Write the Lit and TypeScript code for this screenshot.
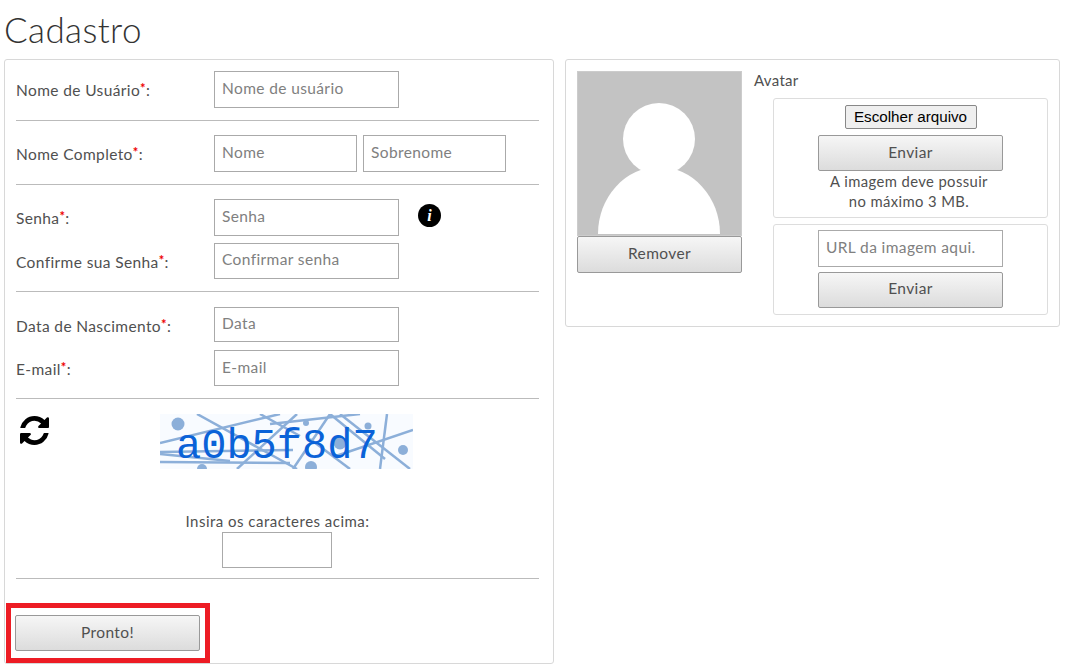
import { LitElement, html, css, svg } from "lit";
import { customElement } from "lit/decorators.js";

const REFRESH = "M1511 928q0 5-1 7-64 268-268 434.5t-478 166.5q-146 0-282.5-55t-243.5-157l-129 129q-19 19-45 19t-45-19-19-45v-448q0-26 19-45t45-19h448q26 0 45 19t19 45-19 45l-137 137q71 66 161 102t187 36q134 0 250-65t186-179q11-17 53-117 8-23 30-23h192q13 0 22.5 9.5t9.5 22.5zm25-800v448q0 26-19 45t-45 19h-448q-26 0-45-19t-19-45 19-45l138-138q-148-137-349-137-134 0-250 65t-186 179q-11 17-53 117-8 23-30 23h-199q-13 0-22.5-9.5t-9.5-22.5v-7q65-268 270-434.5t480-166.5q146 0 284 55.5t245 156.5l130-129q19-19 45-19t45 19 19 45z";

const LINES: number[][] = [
  [37, 0, 137, 55], [0, 29, 120, 0], [0, 38, 133, 36], [0, 48, 130, 49], [0, 40, 70, 47],
  [133, 55, 170, 0], [100, 0, 140, 22], [77, 55, 137, 0], [227, 0, 220, 55], [253, 16, 173, 43],
  [180, 0, 250, 55], [170, 0, 225, 45], [110, 10, 200, 0], [190, 55, 150, 25],
];
const DOTS: number[][] = [[18, 10, 6.5], [146, 9, 3], [208, 12, 3.5], [243, 36, 5], [180, 29, 6.5], [151, 53, 6], [42, 55, 5]];

@customElement("app-root")
export class AppRoot extends LitElement {
  static styles = css`
    :host { display: block; position: relative; box-sizing: border-box; width: 1069px; height: 670px; padding: 0 9px 0 4px; background: #fff; color: #505050; font-family: Lato, "Open Sans", sans-serif; font-size: 15.5px; overflow: hidden; }
    * { box-sizing: border-box; }
    h1 { margin: 0; height: 59px; padding-top: 8px; font-size: 35px; line-height: 42px; font-weight: 300; color: #333; letter-spacing: .4px; }
    .cols { display: flex; gap: 11px; align-items: flex-start; }
    .card { border: 1px solid #d8d8d8; border-radius: 3px; padding: 11px; }
    .left { width: 550px; height: 605px; }
    .right { width: 495px; height: 268px; display: flex; gap: 12px; }
    .sec { border-bottom: 1px solid #bbb; padding-bottom: 12px; margin-right: 3px; }
    .sec.t14 { padding-top: 14px; }
    .sec.t15 { padding-top: 15px; }
    .row { display: flex; align-items: center; }
    .row + .row { margin-top: 7px; }
    .row.g8 + .row { margin-top: 8px; }
    .lab { width: 198px; padding: 1px 0 0 0; white-space: nowrap; letter-spacing: .38px; }
    .g8 .lab { padding-top: 3px; }
    sup { color: #e00; font-size: 13px; line-height: 0; font-weight: 700; vertical-align: 3px; }
    input { display: block; border: 1px solid #aaa; background: #fff; padding: 0 7px 3px; font: inherit; letter-spacing: .38px; color: #444; outline: none; border-radius: 0; }
    input::placeholder { color: #808080; opacity: 1; }
    .w185 { width: 185px; }
    .w143 { width: 143px; }
    .w110 { width: 110px; }
    .h37 { height: 37px; }
    .h36 { height: 36px; }
    .h35 { height: 35px; }
    .hi { padding-bottom: 5px; }
    .ml { margin-left: 6px; }
    .info { width: 23px; height: 23px; border-radius: 50%; background: #000; color: #fff; margin: 0 0 4px 19px; display: flex; align-items: center; justify-content: center; font: italic 700 16px/1 "Liberation Serif", serif; }
    .cap { height: 180px; margin-right: 3px; padding-top: 15px; border-bottom: 1px solid #bbb; display: flex; flex-direction: column; align-items: center; }
    .caprow { display: flex; width: 100%; height: 55px; align-items: flex-start; }
    .ref { width: 29px; height: 29px; margin: 2px 0 0 4px; flex: none; }
    .capimg { width: 253px; height: 55px; margin-left: 111px; flex: none; display: block; overflow: visible; }
    .instr { margin-top: 42px; line-height: 20px; letter-spacing: .48px; font-size: 15px; }
    .cap input { margin: 1px 1px 0 0; }
    .btn { display: block; border: 1px solid #999; border-radius: 2px; background: linear-gradient(#f6f6f6, #dcdcdc); color: #505050; font: inherit; letter-spacing: .38px; padding: 0 0 3px; }
    .go { margin: 36px 0 0 -1px; height: 36px; }
    .mark { position: absolute; left: 6px; top: 603px; width: 204px; height: 60px; border: 5px solid #ed1c24; pointer-events: none; }
    .ava { width: 165px; flex: none; }
    .pic { display: block; width: 165px; height: 165px; border: 1px solid #ccc; background: #c3c3c3; }
    .ava .btn { width: 165px; height: 37px; }
    .up { flex: 1; min-width: 0; }
    .title { height: 27px; line-height: 18px; letter-spacing: .3px; font-size: 15px; }
    .box { margin-left: 19px; border: 1px solid #ddd; border-radius: 3px; display: flex; flex-direction: column; align-items: center; }
    .b1 { height: 120px; padding-top: 6px; }
    .b2 { height: 91px; margin-top: 6px; padding-top: 5px; }
    .file { width: 132px; height: 24px; border: 1px solid #888; border-radius: 2px; background: #efefef; color: #000; font: 15.2px "Liberation Sans", Arial, sans-serif; padding: 0 0 2px; }
    .b1 .btn { margin-top: 6px; height: 36px; width: 185px; }
    .b2 .btn { margin-top: 5px; height: 36px; width: 185px; padding-bottom: 5px; }
    .note { margin-right: 3px; text-align: center; line-height: 20px; font-size: 14.8px; letter-spacing: .4px; }
    .cap-t { font: 42px "Liberation Mono", monospace; fill: #0a62d8; }
  `;

  private req() { return html`<sup>*</sup>:`; }

  render() {
    return html`
      <h1>Cadastro</h1>
      <div class="cols">
        <form class="card left">
          <div class="sec">
            <div class="row">
              <div class="lab">Nome de Usuário${this.req()}</div>
              <input class="w185 h37" placeholder="Nome de usuário" />
            </div>
          </div>
          <div class="sec t14">
            <div class="row">
              <div class="lab">Nome Completo${this.req()}</div>
              <input class="w143 h37" placeholder="Nome" />
              <input class="w143 h37 ml" placeholder="Sobrenome" />
            </div>
          </div>
          <div class="sec t14">
            <div class="row">
              <div class="lab">Senha${this.req()}</div>
              <input class="w185 h37" placeholder="Senha" />
              <span class="info">i</span>
            </div>
            <div class="row">
              <div class="lab">Confirme sua Senha${this.req()}</div>
              <input class="w185 h36 hi" placeholder="Confirmar senha" />
            </div>
          </div>
          <div class="sec t15">
            <div class="row g8">
              <div class="lab">Data de Nascimento${this.req()}</div>
              <input class="w185 h35" placeholder="Data" />
            </div>
            <div class="row">
              <div class="lab">E-mail${this.req()}</div>
              <input class="w185 h36" placeholder="E-mail" />
            </div>
          </div>
          <div class="cap">
            <div class="caprow">
              <svg class="ref" viewBox="0 0 1536 1536"><path d=${REFRESH} fill="#000"></path></svg>
              <svg class="capimg" viewBox="0 0 253 55">
                <svg x="0" y="0" width="253" height="55">
                  <rect width="253" height="55" fill="#f8fbff"></rect>
                  ${LINES.map((l) => svg`<line x1=${l[0]} y1=${l[1]} x2=${l[2]} y2=${l[3]} stroke="#8cafd9" stroke-width="2.5"></line>`)}
                  ${DOTS.map((d) => svg`<circle cx=${d[0]} cy=${d[1]} r=${d[2]} fill="#8cafd9"></circle>`)}
                </svg>
                <text class="cap-t" x="16" y="44">a0b5f8d7</text>
              </svg>
            </div>
            <div class="instr">Insira os caracteres acima:</div>
            <input class="w110 h36" />
          </div>
          <button type="button" class="btn go w185">Pronto!</button>
        </form>
        <div class="card right">
          <div class="ava">
            <svg class="pic" viewBox="1 1 163 163">
              <circle cx="82" cy="68" r="36" fill="#fff"></circle>
              <path d="M21 163 A61 67 0 0 1 143 163 Z" fill="#fff"></path>
            </svg>
            <button type="button" class="btn">Remover</button>
          </div>
          <div class="up">
            <div class="title">Avatar</div>
            <div class="box b1">
              <button type="button" class="file">Escolher arquivo</button>
              <button type="button" class="btn">Enviar</button>
              <div class="note">A imagem deve possuir<br />no máximo 3 MB.</div>
            </div>
            <div class="box b2">
              <input class="w185 h37" placeholder="URL da imagem aqui." />
              <button type="button" class="btn">Enviar</button>
            </div>
          </div>
        </div>
      </div>
      <div class="mark"></div>
    `;
  }
}
